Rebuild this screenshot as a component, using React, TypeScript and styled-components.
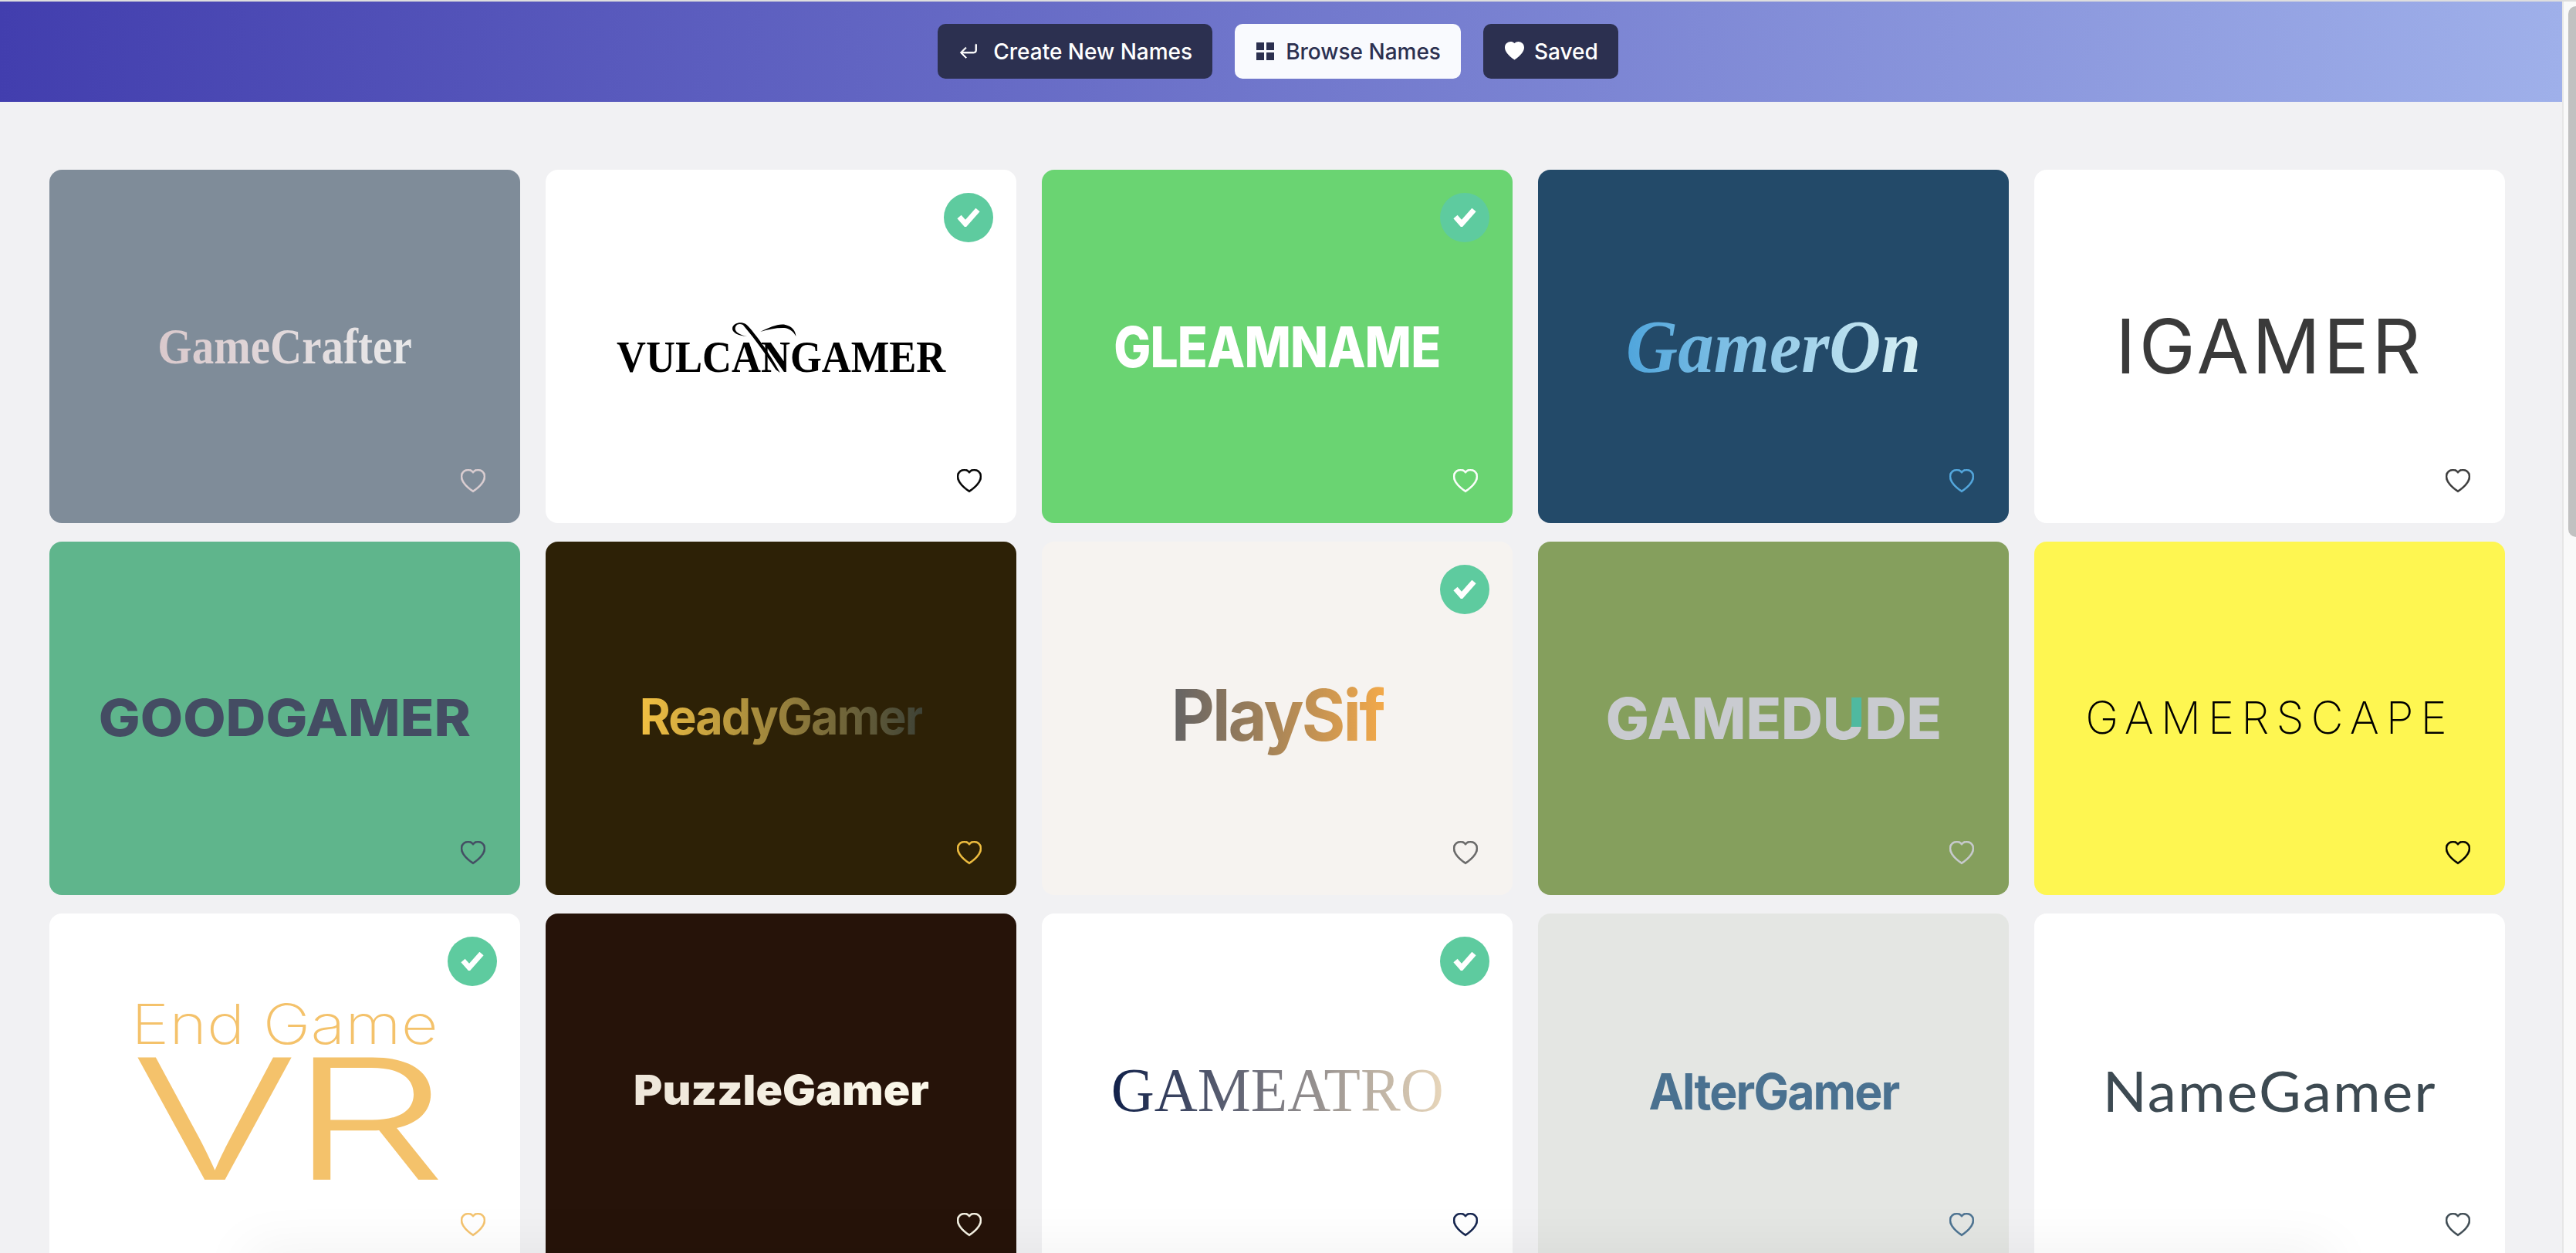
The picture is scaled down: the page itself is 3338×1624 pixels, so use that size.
import React from "react";
import styled, { createGlobalStyle } from "styled-components";
import { BsArrowReturnLeft, BsHeart, BsHeartFill } from "react-icons/bs";

const GlobalStyle = createGlobalStyle`
  html, body {
    margin: 0;
    padding: 0;
    height: 100%;
    overflow: hidden;
    background: #f1f1f3;
    font-family: Inter, "Liberation Sans", sans-serif;
  }
  #root { height: 100%; }
`;

interface LogoData {
  name: string;
  bg: string;
  heart: string;
  picked?: boolean;
  font: string;
  size: number;
  weight: number;
  italic?: boolean;
  spacing?: number;
  color?: string;
  gradient?: string;
  transform?: string;
}

const SERIF = '"Liberation Serif", serif';
const SANS = 'Inter, sans-serif';
const LATO = 'Lato, sans-serif';

const logos: LogoData[] = [
  { name: "GameCrafter", bg: "#7f8c99", heart: "#dccfd2", font: SERIF, size: 62, weight: 700, gradient: "#dac9cc, #e9e9ea", transform: "scale(0.92, 1.06)" },
  { name: "VULCANGAMER", bg: "#ffffff", heart: "#000000", picked: true, font: SERIF, size: 58, weight: 700, color: "#000", transform: "translate(0, 14px) scale(0.906, 1)" },
  { name: "GLEAMNAME", bg: "#6ad472", heart: "#ffffff", picked: true, font: SANS, size: 72, weight: 800, color: "#fff", spacing: -1, transform: "scale(0.89, 1.02)" },
  { name: "GamerOn", bg: "#234a69", heart: "#55a9df", font: SERIF, size: 92, weight: 700, italic: true, gradient: "#4fa5dc, #d8f0f4", transform: "scale(1.01, 1.05)" },
  { name: "IGAMER", bg: "#ffffff", heart: "#3a3a3a", font: SANS, size: 98, weight: 400, spacing: 4, color: "#3a3a3a" },
  { name: "GOODGAMER", bg: "#5fb58c", heart: "#444c63", font: SANS, size: 66, weight: 800, color: "#444c63", transform: "scale(1.087, 1)" },
  { name: "ReadyGamer", bg: "#2d2106", heart: "#f2c042", font: SANS, size: 64, weight: 700, spacing: -2, gradient: "#f2c042, #3e4236", transform: "translate(0, -2px) scale(0.955, 1)" },
  { name: "PlaySif", bg: "#f6f3f0", heart: "#666666", picked: true, font: SANS, size: 92, weight: 700, spacing: -3, gradient: "#636365, #f2a94a", transform: "translate(0, -4px) scale(0.94, 1)" },
  { name: "GAMEDUDE", bg: "#859f5d", heart: "#c9cbd0", font: SANS, size: 74, weight: 800, color: "#c9cbd0", transform: "scale(1.01, 1)" },
  { name: "GAMERSCAPE", bg: "#fef651", heart: "#000000", font: SANS, size: 58, weight: 200, spacing: 9, color: "#000" },
  { name: "End Game", bg: "#ffffff", heart: "#f4c26b", picked: true, font: SANS, size: 72, weight: 200, color: "#f4c26b", transform: "scale(1.157, 1)" },
  { name: "PuzzleGamer", bg: "#261309", heart: "#fbf8ea", font: SANS, size: 54, weight: 900, gradient: "#eee6da, #fbf8ea", transform: "scale(1.055, 1)" },
  { name: "GAMEATRO", bg: "#ffffff", heart: "#10204a", picked: true, font: SERIF, size: 80, weight: 400, gradient: "#10204a, #e8d6ba", transform: "scale(0.97, 1)" },
  { name: "AlterGamer", bg: "#e4e6e3", heart: "#4a7190", font: SANS, size: 64, weight: 700, spacing: -2, color: "#4a7190", transform: "translate(0, 2px) scale(0.95, 1)" },
  { name: "NameGamer", bg: "#ffffff", heart: "#3d4a52", font: LATO, size: 72, weight: 400, spacing: 2, color: "#3d4a52", transform: "scale(1.04, 1)" },
];

const GridIcon = () => (
  <svg width="23" height="23" viewBox="0 0 23 23" fill="currentColor">
    <rect x="0" y="0" width="10" height="10" />
    <rect x="13" y="0" width="10" height="10" />
    <rect x="0" y="13" width="10" height="10" />
    <rect x="13" y="13" width="10" height="10" />
  </svg>
);

const CheckIcon = () => (
  <svg width="30" height="24" viewBox="0 0 30 24" fill="none" stroke="currentColor" strokeWidth="7">
    <polyline points="3,11 11,20 27,2" />
  </svg>
);

const ArrowIcon = () => <BsArrowReturnLeft size={24} stroke="currentColor" strokeWidth={0.6} />;

const navItems = [
  { label: "Create New Names", icon: <ArrowIcon />, active: false, gap: 20 },
  { label: "Browse Names", icon: <GridIcon />, active: true, gap: 15 },
  { label: "Saved", icon: <BsHeartFill size={25} />, active: false, gap: 13 },
];

const App: React.FC = () => {
  return (
    <Screen>
      <GlobalStyle />
      <Page>
        <Header>
          {navItems.map((item) => (
            <NavButton key={item.label} $active={item.active} $gap={item.gap}>
              {item.icon}
              {item.label}
            </NavButton>
          ))}
        </Header>
        <Grid>
          {logos.map((logo) => (
            <Card key={logo.name} $bg={logo.bg}>
              {logo.picked && (
                <Badge>
                  <CheckIcon />
                </Badge>
              )}
              <LogoContent logo={logo} />
              <HeartButton $color={logo.heart}>
                <BsHeart size={32} />
              </HeartButton>
            </Card>
          ))}
        </Grid>
        <BottomShade />
      </Page>
      <ScrollRail>
        <ScrollThumb />
      </ScrollRail>
    </Screen>
  );
};

const LogoContent: React.FC<{ logo: LogoData }> = ({ logo }) => {
  const textProps = {
    $font: logo.font,
    $size: logo.size,
    $weight: logo.weight,
    $italic: logo.italic,
    $spacing: logo.spacing,
    $color: logo.color,
    $gradient: logo.gradient,
    $transform: logo.transform,
  };

  if (logo.name === "End Game") {
    return (
      <StackedLogo>
        <LogoText {...textProps}>End Game</LogoText>
        <BigLetters {...textProps} $size={218} $weight={300} $spacing={-8} $transform="scale(1.48, 1)">
          VR
        </BigLetters>
      </StackedLogo>
    );
  }

  if (logo.name === "GAMEDUDE") {
    return (
      <LogoText {...textProps}>
        GAMED<TealLetter>U</TealLetter>DE
      </LogoText>
    );
  }

  if (logo.name === "VULCANGAMER") {
    return (
      <LogoText {...textProps}>
        VULCANGAMER
        <Swash viewBox="0 0 100 70">
          <path d="M27 21 C14 20 5 16 6 10 C7 4 18 1 25 5 C33 10 62 46 74 68 L68 64 C58 50 40 26 21 6 C14 3 10 7 10 11 C10 15 16 19 27 21Z" />
          <path d="M46 15 C60 9 72 4 82 6 C91 8 96 13 97 21 C93 14 86 10 78 10 C68 10 56 12 46 15Z" />
        </Swash>
      </LogoText>
    );
  }

  return <LogoText {...textProps}>{logo.name}</LogoText>;
};

export default App;

const Screen = styled.div`
  display: flex;
  height: 100%;
  border-top: 2px solid #dedede;
  box-sizing: border-box;
`;

const Page = styled.div`
  position: relative;
  flex: 1;
  min-width: 0;
  overflow: hidden;
  background: #f1f1f3;
`;

const Header = styled.header`
  height: 130px;
  padding-right: 8px;
  box-sizing: border-box;
  display: flex;
  align-items: center;
  justify-content: center;
  gap: 29px;
  background: linear-gradient(92deg, #423eae 0%, #9fb0ea 100%);
`;

const NavButton = styled.button<{ $active: boolean; $gap: number }>`
  display: flex;
  align-items: center;
  gap: ${(p) => p.$gap}px;
  height: 71px;
  margin-top: -1px;
  padding: 0 26px 0 28px;
  border: 0;
  border-radius: 10px;
  font-family: Inter, sans-serif;
  font-size: 28px;
  font-weight: 500;
  color: ${(p) => (p.$active ? "#2c3050" : "#ffffff")};
  background: ${(p) => (p.$active ? "#f9fafe" : "#2c3050")};
`;

const Grid = styled.main`
  display: grid;
  grid-template-columns: repeat(5, 610px);
  grid-auto-rows: 458px;
  column-gap: 33px;
  row-gap: 24px;
  padding: 88px 74px 0 64px;
`;

const Card = styled.article<{ $bg: string }>`
  position: relative;
  display: flex;
  align-items: center;
  justify-content: center;
  border-radius: 16px;
  background: ${(p) => p.$bg};
`;

const Badge = styled.span`
  position: absolute;
  top: 30px;
  right: 30px;
  width: 64px;
  height: 64px;
  border-radius: 50%;
  display: flex;
  align-items: center;
  justify-content: center;
  color: #fff;
  background: #5ecb9f;
`;

const HeartButton = styled.span<{ $color: string }>`
  position: absolute;
  right: 45px;
  bottom: 38px;
  display: flex;
  color: ${(p) => p.$color};
  svg {
    stroke: currentColor;
    stroke-width: 0.35px;
  }
`;

const LogoText = styled.span<{
  $font: string;
  $size: number;
  $weight: number;
  $italic?: boolean;
  $spacing?: number;
  $color?: string;
  $gradient?: string;
  $transform?: string;
}>`
  position: relative;
  display: inline-block;
  white-space: nowrap;
  line-height: 1.2;
  font-family: ${(p) => p.$font};
  font-size: ${(p) => p.$size}px;
  font-weight: ${(p) => p.$weight};
  font-style: ${(p) => (p.$italic ? "italic" : "normal")};
  letter-spacing: ${(p) => p.$spacing ?? 0}px;
  color: ${(p) => p.$color ?? "transparent"};
  transform: ${(p) => p.$transform ?? "none"};
  ${(p) =>
    p.$gradient
      ? `background: linear-gradient(90deg, ${p.$gradient});
         -webkit-background-clip: text;
         background-clip: text;`
      : ""}
`;

const BigLetters = styled(LogoText)`
  line-height: 0.74;
`;

const StackedLogo = styled.div`
  display: flex;
  flex-direction: column;
  align-items: center;
  padding-bottom: 11px;
`;

const TealLetter = styled.span`
  background:
    linear-gradient(90deg, #c9cbd0 58%, transparent 58%),
    linear-gradient(180deg, #4fb9a0 62%, #c9cbd0 62%);
  -webkit-background-clip: text;
  background-clip: text;
  color: transparent;
`;

const Swash = styled.svg`
  position: absolute;
  left: calc(50% - 78px);
  top: -13px;
  width: 105px;
  height: 70px;
  fill: #000;
`;

const BottomShade = styled.div`
  position: absolute;
  left: 320px;
  right: 300px;
  bottom: -40px;
  height: 40px;
  box-shadow: 0 0 70px 0 rgba(0, 0, 0, 0.08);
  pointer-events: none;
`;

const ScrollRail = styled.div`
  width: 18px;
  box-sizing: border-box;
  display: flex;
  justify-content: flex-end;
  padding-top: 6px;
  border-left: 2px solid #e6e6e6;
  background: #f9f9f9;
`;

const ScrollThumb = styled.div`
  width: 10px;
  height: 688px;
  border-radius: 10px 0 0 10px;
  background: #c1c1c1;
`;
